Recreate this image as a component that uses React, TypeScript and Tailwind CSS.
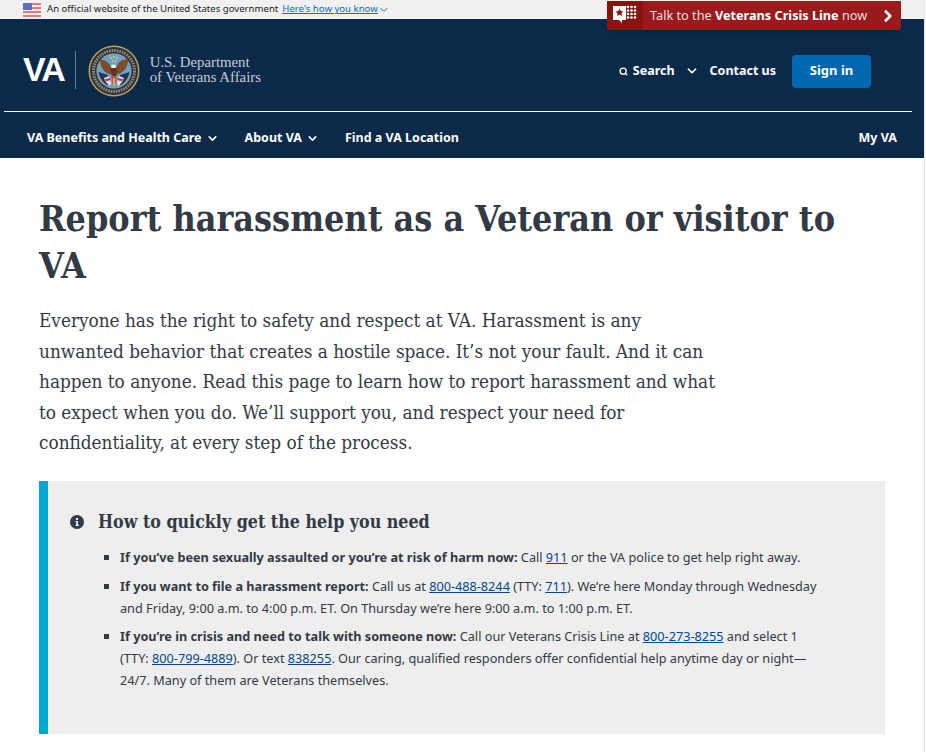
import { ChevronDown, ChevronRight, Search } from "lucide-react";

const sans = "font-['Noto_Sans',sans-serif]";
const slab = "font-['DejaVu_Serif_Condensed','DejaVu_Serif',serif]";

function Flag() {
  return (
    <svg width="18" height="14" viewBox="0 0 18 14" className="shrink-0">
      <rect width="18" height="14" fill="#fbeeee" />
      <rect width="18" height="2" fill="#e8797a" />
      <rect y="4" width="18" height="2" fill="#e8797a" />
      <rect y="8" width="18" height="2" fill="#e8797a" />
      <rect y="12" width="18" height="2" fill="#e8797a" />
      <rect width="9" height="7" fill="#5d6fb5" />
    </svg>
  );
}

function Seal() {
  return (
    <svg width="52" height="52" viewBox="0 0 52 52" className="shrink-0">
      <circle cx="26" cy="26" r="25.5" fill="#c4a052" />
      <circle cx="26" cy="26" r="24" fill="#26344a" />
      <circle cx="26" cy="26" r="20.5" fill="none" stroke="#9a8a68" strokeWidth="3" strokeDasharray="1.6 1" />
      <circle cx="26" cy="26" r="17.5" fill="#c4a052" />
      <circle cx="26" cy="26" r="17" fill="#6ba3c8" />
      <path d="M10.5 27l9.5 3v10.5c-5-2.500-8.500-7.500-9.500-13.500zM41.500 27l-9.500 3v10.500c5-2.500 8.500-7.500 9.500-13.500z" fill="#23345c" />
      <path d="M25 26C22 18 17 14 12 15c0 6 3 13 12 15zM27 26c2-8 7-13 13-11 0 7-4 13-12 15z" fill="#7c4c2b" />
      <path d="M23 21c1-2 4-2 5 0l-.5 2h-4z" fill="#f2efe4" />
      <path d="M22.500 23h6.500l-1 9h-4z" fill="#5c3720" />
      <path d="M16 33l5-2 2 7-1 3c-3-2-5-5-6-8zM36 33l-5-2-2 7 1 3c3-2 5-5 6-8z" fill="#e7e3de" />
      <path d="M17 34l5-1 .5 2-4.500 1.500zM35 34l-5-1-.5 2 4.500 1.500z" fill="#c2393d" />
      <path d="M23.500 31h5l-.7 7-1.800 4-1.800-4z" fill="#cf4a3c" />
      <path d="M25.200 33h1.600v8h-1.600z" fill="#e1c060" />
      <g fill="#e0c463">
        <circle cx="23" cy="13" r="1" />
        <circle cx="29" cy="13" r="1" />
        <circle cx="26" cy="12" r="1" />
        <circle cx="24.500" cy="16" r="1" />
        <circle cx="27.500" cy="16" r="1" />
      </g>
    </svg>
  );
}

function CrisisIcon() {
  return (
    <svg width="26" height="24" viewBox="0 0 26 24">
      <path d="M1 2h13v14H10v3l-3-3H1z" fill="#fff" />
      <path d="M7.500 4.500l1.200 2.600 2.800.3-2.100 1.900.6 2.800-2.500-1.400-2.500 1.400.6-2.800-2.100-1.900 2.800-.3z" fill="#8b1611" />
      {[3, 6.5, 10, 13.5].map((y) =>
        [16, 19.5, 23].map((x) => <circle key={`${x}-${y}`} cx={x} cy={y} r="1.300" fill="#fff" />)
      )}
    </svg>
  );
}

function Phone({ children }: { children: string }) {
  return <a className="text-[#004795] underline">{children}</a>;
}

function Bullet({ children, className }: { children: React.ReactNode; className?: string }) {
  return (
    <li className={`relative ${className ?? ""}`}>
      <span className="absolute left-[-16px] top-[9px] h-[5px] w-[5px] bg-[#323a45]" />
      {children}
    </li>
  );
}

export default function App() {
  return (
    <div className={`relative min-h-[752px] w-[925px] overflow-hidden border-r border-[#e4e4e4] bg-white ${sans} text-[#323a45]`}>
      <div className="flex h-[19px] items-center bg-[#f1f1f1] pl-[23px] text-[9.6px] text-[#212121]">
        <Flag />
        <span className="ml-[6px]">An official website of the United States government</span>
        <a className="ml-[4px] text-[#0071bb] underline">Here's how you know</a>
        <ChevronDown className="h-3 w-3 text-[#0071bb]" />
      </div>

      <div className="absolute left-[607px] top-px flex h-[29px] w-[294px] items-center rounded-b-[2px] bg-[#981b1e] text-[12.7px] text-[#f5dede] shadow-md">
        <div className="flex h-full w-[36px] items-center justify-center bg-[#84160f]">
          <CrisisIcon />
        </div>
        <span className="ml-[7px]">
          Talk to the <b className="font-bold text-white">Veterans Crisis Line</b> now
        </span>
        <ChevronRight className="ml-auto mr-[4px] h-[18px] w-[18px] text-white" strokeWidth={3.5} />
      </div>

      <header className="h-[139px] bg-[#0b2a4a] text-white">
        <div className="flex h-[92px] items-center pl-[23px] pr-[53px] pt-[12px]">
          <span className="-translate-y-[2px] font-['Liberation_Sans',sans-serif] text-[34px] font-bold leading-none tracking-[-2px]">VA</span>
          <div className="ml-[11px] h-[38px] w-px -translate-y-px bg-white/40" />
          <div className="ml-[12px]">
            <Seal />
          </div>
          <div className="ml-[10px] -translate-y-px font-['Liberation_Serif',serif] text-[14.8px] leading-[15px] text-[#c5ccd4]">
            <div>U.S. Department</div>
            <div>of Veterans Affairs</div>
          </div>
          <div className="ml-auto flex items-center text-[12.5px] font-bold">
            <Search className="h-[9px] w-[9px]" strokeWidth={3.5} />
            <span className="ml-[5px]">Search</span>
            <ChevronDown className="ml-[10px] h-[14px] w-[14px]" strokeWidth={3} />
            <span className="ml-[11px]">Contact us</span>
            <button className="ml-[16px] flex h-[33px] w-[79px] items-center justify-center rounded-[4px] bg-[#0067b1] text-[13px] font-bold">
              Sign in
            </button>
          </div>
        </div>
        <div className="ml-[4px] mr-[12px] h-px bg-white" />
        <nav className="flex h-[46px] items-center pl-[27px] pr-[27px] pt-[6px] text-[12.5px] font-bold">
          <span>VA Benefits and Health Care</span>
          <ChevronDown className="ml-[4px] h-[13px] w-[13px]" strokeWidth={3} />
          <span className="ml-[26px]">About VA</span>
          <ChevronDown className="ml-[4px] h-[13px] w-[13px]" strokeWidth={3} />
          <span className="ml-[26px]">Find a VA Location</span>
          <span className="ml-auto">My VA</span>
        </nav>
      </header>

      <main className="pl-[39px] pr-[39px]">
        <h1 className={`${slab} mt-[37px] text-[35.6px] font-bold leading-[47px] text-[#323a45]`}>
          Report harassment as a Veteran or visitor to VA
        </h1>
        <p className={`${slab} mt-[17px] text-[18.8px] leading-[30.5px]`}>
          Everyone has the right to safety and respect at VA. Harassment is any
          <br />
          unwanted behavior that creates a hostile space. It’s not your fault. And it can
          <br />
          happen to anyone. Read this page to learn how to report harassment and what
          <br />
          to expect when you do. We’ll support you, and respect your need for
          <br />
          confidentiality, at every step of the process.
        </p>

        <section className="mt-[22px] h-[253px] border-l-[9px] border-[#00a6d2] bg-[#eeeeee] pl-[22px]">
          <div className="flex items-center gap-[14px] pt-[29px]">
            <svg width="14" height="14" viewBox="0 0 14 14" className="shrink-0">
              <circle cx="7" cy="7" r="7" fill="#323a45" />
              <rect x="6" y="3" width="2" height="2" fill="#eee" />
              <path d="M5.500 6h2.500v3.800h.8V11H5.500V9.800h.8V7.100h-.8z" fill="#eee" />
            </svg>
            <h2 className={`${slab} text-[17.7px] font-bold leading-6`}>How to quickly get the help you need</h2>
          </div>
          <ul className="ml-[50px] mt-[12px] w-[706px] text-[12.7px] leading-[22px]">
            <Bullet>
              <b>If you’ve been sexually assaulted or you’re at risk of harm now:</b> Call <Phone>911</Phone> or the VA police to get help right away.
            </Bullet>
            <Bullet className="mt-[7px]">
              <b>If you want to file a harassment report:</b> Call us at <Phone>800-488-8244</Phone> (TTY: <Phone>711</Phone>). We’re here Monday through Wednesday and Friday, 9:00 a.m. to 4:00 p.m. ET. On Thursday we’re here 9:00 a.m. to 1:00 p.m. ET.
            </Bullet>
            <Bullet className="mt-[6px]">
              <b>If you’re in crisis and need to talk with someone now:</b> Call our Veterans Crisis Line at <Phone>800-273-8255</Phone> and select 1 (TTY: <Phone>800-799-4889</Phone>). Or text <Phone>838255</Phone>. Our caring, qualified responders offer confidential help anytime day or night—24/7. Many of them are Veterans themselves.
            </Bullet>
          </ul>
        </section>
      </main>
    </div>
  );
}
